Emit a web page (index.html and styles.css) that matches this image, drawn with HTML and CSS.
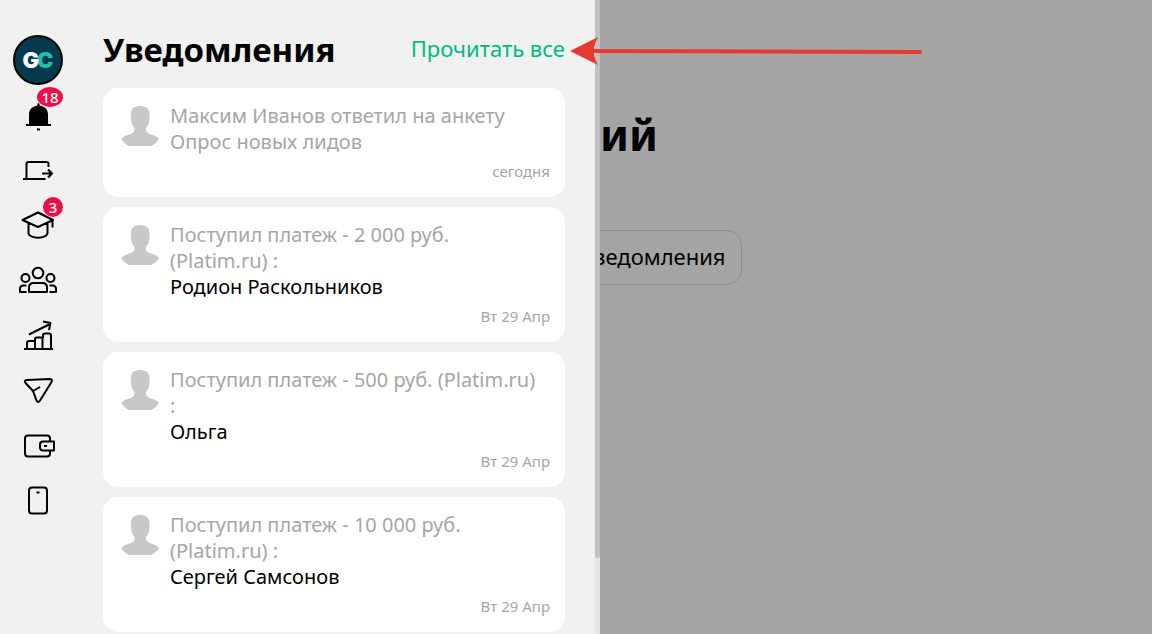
FILE: index.html
```html
<!DOCTYPE html>
<html lang="ru">
<head>
<meta charset="utf-8">
<meta name="viewport" content="width=device-width, initial-scale=1">
<title>Уведомления</title>
<link rel="stylesheet" href="styles.css">
</head>
<body>
<svg class="symbols" aria-hidden="true">
  <symbol id="person" viewBox="0 0 39 42">
    <path fill="#c8c8c8" d="M19 1c-5 0-9 2-9 8 0 2-.3 3 0 5 .2 4 1.500 7 3.500 9v2c0 3-4 4-8 5.500C3 31.500 1 33 .5 34c0 2 6 7 8 7h21c2 0 8-5 8.500-7-.5-1-2.500-2.500-5-3.500-4-1.500-8-2.500-8-5.500v-2c2-2 3.200-5 3.500-9 .3-2 0-3 0-5C28.500 3 24 1 19 1Z"/>
  </symbol>
</svg>

<main class="page">
  <h1 class="page-title">ий</h1>
  <button class="page-button" type="button">ведомления</button>
</main>

<aside class="drawer">
  <nav class="rail" aria-label="Разделы">
    <a class="logo" href="#" aria-label="GC"><span class="logo-g">G</span><span class="logo-c">C</span></a>
    <a class="rail-item" href="#" aria-label="Уведомления">
      <svg width="40" height="40" viewBox="0 0 40 40"><path d="M20.500 7c1 0 1.200 1 1.200 2.500C27 10.500 30 13.500 30 18.500V28h3v2H8v-2h3v-9.500c0-5 3-8 8.300-9C19.300 8 19.500 7 20.500 7ZM19 32.500h3v2h-3z"/></svg>
      <span class="badge">18</span>
    </a>
    <a class="rail-item" href="#" aria-label="Вход">
      <svg class="line" width="40" height="40" viewBox="0 0 40 40"><path d="M5 28h22.500M8.500 28V13q0-2 2-2h18q2 0 2 2v3M24 22.500h10M30 18.500l4 4-4 4"/></svg>
    </a>
    <a class="rail-item" href="#" aria-label="Обучение">
      <svg class="line" width="40" height="40" viewBox="0 0 40 40"><path d="M4.500 14 20 6.500l15 7.500L20 21ZM10.500 17.500v10c2 5.500 17 5.500 19 0v-10M34.500 14v7.500"/></svg>
      <span class="badge badge-round">3</span>
    </a>
    <a class="rail-item" href="#" aria-label="Пользователи">
      <svg class="line" width="40" height="40" viewBox="0 0 40 40"><circle cx="20" cy="12" r="5.300"/><circle cx="7.500" cy="17" r="4"/><circle cx="32.500" cy="17" r="4"/><path d="M11 31V26.500q0-4.500 4.500-4.500h9q4.500 0 4.500 4.500v4.500ZM8.500 31H2V28q0-3.500 3.500-3.500h3M31.500 31H38V28q0-3.500-3.500-3.500h-3"/></svg>
    </a>
    <a class="rail-item" href="#" aria-label="Продажи">
      <svg class="line" width="40" height="40" viewBox="0 0 40 40"><path d="M6 33h29M9 33V27q0-2 2-2h6v8M17 25v-1.500q0-2 2-2h5.500V33M25 22v-2.500q0-2 2-2h4q2 0 2 2V33M11 18.500 32 8M25 5.500l7.500 1.500-1.500 7"/></svg>
    </a>
    <a class="rail-item" href="#" aria-label="Сообщения">
      <svg class="line" width="40" height="40" viewBox="0 0 40 40"><path d="M9 9 31.500 8q3.500 0 2 3L22 29.500q-2 3-3.500 0L15 20 7.500 12q-2-2.800 1.500-3ZM15 20l7-4"/></svg>
    </a>
    <a class="rail-item" href="#" aria-label="Кошелёк">
      <svg class="line" width="40" height="40" viewBox="0 0 40 40"><path d="M32 14.500v-2q0-3-3-3H10q-3 0-3 3v15q0 3 3 3h19q3 0 3-3v-2.500M36 15.500v9H25q-3 0-3-3v-3q0-3 3-3ZM26 20h3"/></svg>
    </a>
    <a class="rail-item" href="#" aria-label="Приложение">
      <svg class="line" width="40" height="40" viewBox="0 0 40 40"><rect x="11" y="6.500" width="18" height="26" rx="3"/><path d="M18.500 11.500h3"/></svg>
    </a>
  </nav>

  <section class="panel">
    <header class="panel-head">
      <h2 class="panel-title">Уведомления</h2>
      <button class="read-all" type="button">Прочитать все</button>
    </header>
    <article class="card">
      <svg class="avatar" aria-hidden="true"><use href="#person"/></svg>
      <div class="card-body">
        <p class="card-text">Максим Иванов ответил на анкету<br>Опрос новых лидов</p>
        <time class="card-date">сегодня</time>
      </div>
    </article>
    <article class="card">
      <svg class="avatar" aria-hidden="true"><use href="#person"/></svg>
      <div class="card-body">
        <p class="card-text">Поступил платеж - 2 000 руб.<br>(Platim.ru) :</p>
        <p class="card-name">Родион Раскольников</p>
        <time class="card-date">Вт 29 Апр</time>
      </div>
    </article>
    <article class="card">
      <svg class="avatar" aria-hidden="true"><use href="#person"/></svg>
      <div class="card-body">
        <p class="card-text">Поступил платеж - 500 руб. (Platim.ru)<br>:</p>
        <p class="card-name">Ольга</p>
        <time class="card-date">Вт 29 Апр</time>
      </div>
    </article>
    <article class="card">
      <svg class="avatar" aria-hidden="true"><use href="#person"/></svg>
      <div class="card-body">
        <p class="card-text">Поступил платеж - 10 000 руб.<br>(Platim.ru) :</p>
        <p class="card-name">Сергей Самсонов</p>
        <time class="card-date">Вт 29 Апр</time>
      </div>
    </article>
  </section>
  <div class="scroll-track"><div class="scroll-thumb"></div></div>
</aside>

<svg class="pointer" width="356" height="30" viewBox="0 0 356 30" aria-hidden="true">
  <path d="M20 15 350 16" stroke="#e63a30" stroke-width="4" stroke-linecap="round"/>
  <path d="M0 15 28 1q-8 14 0 28Z" fill="#e63a30"/>
</svg>
</body>
</html>
```

FILE: styles.css
```css
* { box-sizing: border-box; }

body {
  margin: 0;
  height: 100vh;
  overflow: hidden;
  background: #a5a5a5;
  color: #000;
  font-family: "Noto Sans", sans-serif;
}

h1, h2, p { margin: 0; }

button { font: inherit; cursor: pointer; }

.symbols { position: absolute; width: 0; height: 0; }

.page {
  display: flex;
  flex-direction: column;
  align-items: flex-start;
  gap: 65px;
  padding: 105px 0 0 600px;
}

.page-title {
  font-size: 43px;
  line-height: 60px;
}

.page-button {
  height: 55px;
  margin-left: -23px;
  padding: 0 15px 4px;
  border: 1px solid #8c8c8c;
  border-radius: 15px;
  background: none;
  font-size: 22px;
}

.drawer {
  position: absolute;
  top: 0;
  bottom: 0;
  left: 0;
  display: flex;
  width: 600px;
  overflow: hidden;
  background: #f1f1f1;
}

.rail {
  display: flex;
  flex: none;
  flex-direction: column;
  align-items: center;
  width: 76px;
  padding-top: 35px;
}

.logo {
  display: flex;
  align-items: center;
  justify-content: center;
  width: 50px;
  height: 50px;
  margin-bottom: 3px;
  border: 2px solid #000;
  border-radius: 50%;
  background: #053a4e;
  font: 900 22px "Inter", sans-serif;
  text-decoration: none;
}

.logo-g { z-index: 1; color: #fff; }
.logo-c { margin-left: -2px; color: #1fbfae; }

.rail-item {
  position: relative;
  display: flex;
  flex: none;
  align-items: center;
  justify-content: center;
  width: 50px;
  height: 55px;
}

.line {
  fill: none;
  stroke: #000;
  stroke-width: 2;
  stroke-linejoin: round;
}

.badge {
  position: absolute;
  top: -1px;
  right: 0;
  width: 26px;
  height: 20px;
  border-radius: 50%;
  background: #f10d45;
  color: #fff;
  font-size: 15px;
  font-weight: 500;
  line-height: 20px;
  text-align: center;
}

.badge-round { width: 20px; }

.panel {
  display: flex;
  flex: 1;
  flex-direction: column;
  gap: 10px;
  padding: 26px 30px 0 27px;
}

.panel-head {
  display: flex;
  flex: none;
  align-items: center;
  justify-content: space-between;
  height: 52px;
  padding-bottom: 4px;
}

.panel-title {
  font-size: 33px;
  line-height: 48px;
}

.read-all {
  padding: 0 0 4px;
  border: 0;
  background: none;
  color: #00b982;
  font-size: 22px;
}

.card {
  display: flex;
  flex: none;
  gap: 10px;
  padding: 15px 15px 15px 18px;
  border-radius: 15px;
  background: #fff;
}

.avatar {
  flex: none;
  width: 39px;
  height: 42px;
  margin-top: 2px;
}

.card-body { flex: 1; }

.card-text,
.card-name {
  font-size: 20px;
  line-height: 26px;
  white-space: nowrap;
}

.card-text { color: #a6a6a6; }

.card-date {
  display: block;
  margin-top: 6px;
  color: #a6a6a6;
  font-size: 15px;
  line-height: 21px;
  text-align: right;
}

.scroll-track {
  flex: none;
  width: 5px;
  background: #e5e5e5;
}

.scroll-thumb {
  height: 88%;
  border-radius: 0 0 2px 2px;
  background: #c1c1c1;
}

.pointer {
  position: absolute;
  top: 36px;
  left: 570px;
  fill: none;
}
```
